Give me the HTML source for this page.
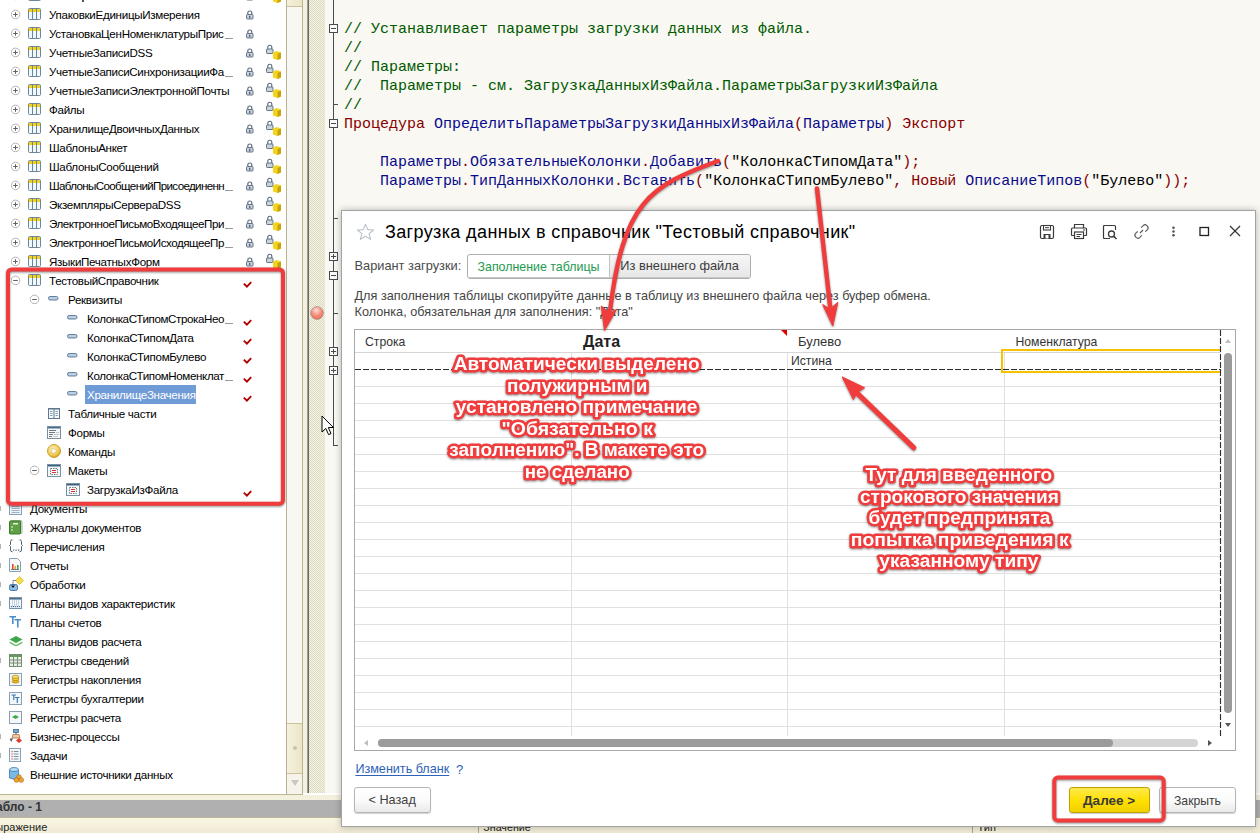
<!DOCTYPE html>
<html><head><meta charset="utf-8">
<style>
*{box-sizing:border-box}
html,body{margin:0;padding:0}
body{width:1260px;height:833px;position:relative;overflow:hidden;background:#f9f8f3;font-family:"Liberation Sans",sans-serif}
.a{position:absolute}
/* tree */
#tree{left:0;top:0;width:286px;height:794px;background:#fff;overflow:hidden}
.r{position:absolute;left:0;height:19px;width:286px;font-size:11.2px;color:#000;white-space:nowrap}
.tt{font-size:11.6px;letter-spacing:-0.3px;line-height:15px;white-space:nowrap;color:#000}
/* code */
.code{position:absolute;left:344px;font-family:"Liberation Mono",monospace;font-size:15px;line-height:19px;white-space:pre;color:#000}
.cm{color:#005a00}
.kw{color:#8a0000}
.id{color:#0a0a8c}
.pu{color:#8a0000}
</style></head>
<body>
<!-- tree panel -->
<div id="tree" class="a"><svg class="a" style="left:11px;top:-10px" width="10" height="11" viewBox="0 0 10 11" ><circle cx="4.5" cy="5.4" r="4.3" fill="#fff" stroke="#b3b3b3" stroke-width="1"/><line x1="2.2" y1="5.5" x2="6.8" y2="5.5" stroke="#606060" stroke-width="1"/><line x1="4.5" y1="3.2" x2="4.5" y2="7.8" stroke="#606060" stroke-width="1"/></svg><svg class="a" style="left:28px;top:-11px" width="13" height="12" viewBox="0 0 13 12" ><rect x="0.5" y="0.5" width="12" height="11" rx="1" fill="#eef8fd" stroke="#6f8599"/><rect x="1" y="1" width="3" height="3" fill="#f5d21c"/><rect x="5" y="1" width="3" height="3" fill="#f5d21c"/><rect x="9" y="1" width="3" height="3" fill="#f5d21c"/><line x1="4.5" y1="1" x2="4.5" y2="11" stroke="#6f8599"/><line x1="8.5" y1="1" x2="8.5" y2="11" stroke="#6f8599"/></svg><div class="a" style="left:82px;top:0;width:2px;height:2px;background:#555"></div><svg class="a" style="left:246px;top:-9px" width="8" height="10" viewBox="0 0 8 10" ><path d="M1.8 4.5 V3 a2 2 0 0 1 4 0 V4.5" fill="none" stroke="#56677a" stroke-width="1.1"/><rect x="0.5" y="4.5" width="6.5" height="4.5" rx="0.8" fill="#c9d3dc" stroke="#56677a" stroke-width="0.9"/><rect x="3" y="5.8" width="1.4" height="2.4" fill="#56677a"/></svg><svg class="a" style="left:266px;top:-13px" width="16" height="17" viewBox="0 0 16 17" ><path d="M1.8 5 V3.2 a2 2 0 0 1 4 0 V5" fill="none" stroke="#56677a" stroke-width="1.1"/><rect x="0.5" y="5" width="6.5" height="4.5" rx="0.8" fill="#c9d3dc" stroke="#56677a" stroke-width="0.9"/><path d="M7 8.5 L10.5 7 L15 8.5 L15 14.5 L11.5 16 L7 14.5 Z" fill="#f2d51c"/><path d="M11.5 10 L15 8.5 L15 14.5 L11.5 16 Z" fill="#c9a30e"/></svg><svg class="a" style="left:11px;top:9px" width="10" height="11" viewBox="0 0 10 11" ><circle cx="4.5" cy="5.4" r="4.3" fill="#fff" stroke="#b3b3b3" stroke-width="1"/><line x1="2.2" y1="5.5" x2="6.8" y2="5.5" stroke="#606060" stroke-width="1"/><line x1="4.5" y1="3.2" x2="4.5" y2="7.8" stroke="#606060" stroke-width="1"/></svg><svg class="a" style="left:28px;top:8px" width="13" height="12" viewBox="0 0 13 12" ><rect x="0.5" y="0.5" width="12" height="11" rx="1" fill="#eef8fd" stroke="#6f8599"/><rect x="1" y="1" width="3" height="3" fill="#f5d21c"/><rect x="5" y="1" width="3" height="3" fill="#f5d21c"/><rect x="9" y="1" width="3" height="3" fill="#f5d21c"/><line x1="4.5" y1="1" x2="4.5" y2="11" stroke="#6f8599"/><line x1="8.5" y1="1" x2="8.5" y2="11" stroke="#6f8599"/></svg><div class="a tt" style="left:49px;top:6.9px">УпаковкиЕдиницыИзмерения</div><svg class="a" style="left:246px;top:10px" width="8" height="10" viewBox="0 0 8 10" ><path d="M1.8 4.5 V3 a2 2 0 0 1 4 0 V4.5" fill="none" stroke="#56677a" stroke-width="1.1"/><rect x="0.5" y="4.5" width="6.5" height="4.5" rx="0.8" fill="#c9d3dc" stroke="#56677a" stroke-width="0.9"/><rect x="3" y="5.8" width="1.4" height="2.4" fill="#56677a"/></svg><svg class="a" style="left:11px;top:28px" width="10" height="11" viewBox="0 0 10 11" ><circle cx="4.5" cy="5.4" r="4.3" fill="#fff" stroke="#b3b3b3" stroke-width="1"/><line x1="2.2" y1="5.5" x2="6.8" y2="5.5" stroke="#606060" stroke-width="1"/><line x1="4.5" y1="3.2" x2="4.5" y2="7.8" stroke="#606060" stroke-width="1"/></svg><svg class="a" style="left:28px;top:27px" width="13" height="12" viewBox="0 0 13 12" ><rect x="0.5" y="0.5" width="12" height="11" rx="1" fill="#eef8fd" stroke="#6f8599"/><rect x="1" y="1" width="3" height="3" fill="#f5d21c"/><rect x="5" y="1" width="3" height="3" fill="#f5d21c"/><rect x="9" y="1" width="3" height="3" fill="#f5d21c"/><line x1="4.5" y1="1" x2="4.5" y2="11" stroke="#6f8599"/><line x1="8.5" y1="1" x2="8.5" y2="11" stroke="#6f8599"/></svg><div class="a tt" style="left:49px;top:25.9px;letter-spacing:-0.300px">УстановкаЦенНоменклатурыПрис</div><div class="a" style="left:225px;top:37.8px;width:8px;height:1px;background:#9a9a9a"></div><svg class="a" style="left:246px;top:29px" width="8" height="10" viewBox="0 0 8 10" ><path d="M1.8 4.5 V3 a2 2 0 0 1 4 0 V4.5" fill="none" stroke="#56677a" stroke-width="1.1"/><rect x="0.5" y="4.5" width="6.5" height="4.5" rx="0.8" fill="#c9d3dc" stroke="#56677a" stroke-width="0.9"/><rect x="3" y="5.8" width="1.4" height="2.4" fill="#56677a"/></svg><svg class="a" style="left:11px;top:47px" width="10" height="11" viewBox="0 0 10 11" ><circle cx="4.5" cy="5.4" r="4.3" fill="#fff" stroke="#b3b3b3" stroke-width="1"/><line x1="2.2" y1="5.5" x2="6.8" y2="5.5" stroke="#606060" stroke-width="1"/><line x1="4.5" y1="3.2" x2="4.5" y2="7.8" stroke="#606060" stroke-width="1"/></svg><svg class="a" style="left:28px;top:46px" width="13" height="12" viewBox="0 0 13 12" ><rect x="0.5" y="0.5" width="12" height="11" rx="1" fill="#eef8fd" stroke="#6f8599"/><rect x="1" y="1" width="3" height="3" fill="#f5d21c"/><rect x="5" y="1" width="3" height="3" fill="#f5d21c"/><rect x="9" y="1" width="3" height="3" fill="#f5d21c"/><line x1="4.5" y1="1" x2="4.5" y2="11" stroke="#6f8599"/><line x1="8.5" y1="1" x2="8.5" y2="11" stroke="#6f8599"/></svg><div class="a tt" style="left:49px;top:44.9px">УчетныеЗаписиDSS</div><svg class="a" style="left:246px;top:48px" width="8" height="10" viewBox="0 0 8 10" ><path d="M1.8 4.5 V3 a2 2 0 0 1 4 0 V4.5" fill="none" stroke="#56677a" stroke-width="1.1"/><rect x="0.5" y="4.5" width="6.5" height="4.5" rx="0.8" fill="#c9d3dc" stroke="#56677a" stroke-width="0.9"/><rect x="3" y="5.8" width="1.4" height="2.4" fill="#56677a"/></svg><svg class="a" style="left:266px;top:44px" width="16" height="17" viewBox="0 0 16 17" ><path d="M1.8 5 V3.2 a2 2 0 0 1 4 0 V5" fill="none" stroke="#56677a" stroke-width="1.1"/><rect x="0.5" y="5" width="6.5" height="4.5" rx="0.8" fill="#c9d3dc" stroke="#56677a" stroke-width="0.9"/><path d="M7 8.5 L10.5 7 L15 8.5 L15 14.5 L11.5 16 L7 14.5 Z" fill="#f2d51c"/><path d="M11.5 10 L15 8.5 L15 14.5 L11.5 16 Z" fill="#c9a30e"/></svg><svg class="a" style="left:11px;top:66px" width="10" height="11" viewBox="0 0 10 11" ><circle cx="4.5" cy="5.4" r="4.3" fill="#fff" stroke="#b3b3b3" stroke-width="1"/><line x1="2.2" y1="5.5" x2="6.8" y2="5.5" stroke="#606060" stroke-width="1"/><line x1="4.5" y1="3.2" x2="4.5" y2="7.8" stroke="#606060" stroke-width="1"/></svg><svg class="a" style="left:28px;top:65px" width="13" height="12" viewBox="0 0 13 12" ><rect x="0.5" y="0.5" width="12" height="11" rx="1" fill="#eef8fd" stroke="#6f8599"/><rect x="1" y="1" width="3" height="3" fill="#f5d21c"/><rect x="5" y="1" width="3" height="3" fill="#f5d21c"/><rect x="9" y="1" width="3" height="3" fill="#f5d21c"/><line x1="4.5" y1="1" x2="4.5" y2="11" stroke="#6f8599"/><line x1="8.5" y1="1" x2="8.5" y2="11" stroke="#6f8599"/></svg><div class="a tt" style="left:49px;top:63.9px;letter-spacing:-0.318px">УчетныеЗаписиСинхронизацииФа</div><div class="a" style="left:225px;top:75.8px;width:8px;height:1px;background:#9a9a9a"></div><svg class="a" style="left:246px;top:67px" width="8" height="10" viewBox="0 0 8 10" ><path d="M1.8 4.5 V3 a2 2 0 0 1 4 0 V4.5" fill="none" stroke="#56677a" stroke-width="1.1"/><rect x="0.5" y="4.5" width="6.5" height="4.5" rx="0.8" fill="#c9d3dc" stroke="#56677a" stroke-width="0.9"/><rect x="3" y="5.8" width="1.4" height="2.4" fill="#56677a"/></svg><svg class="a" style="left:266px;top:63px" width="16" height="17" viewBox="0 0 16 17" ><path d="M1.8 5 V3.2 a2 2 0 0 1 4 0 V5" fill="none" stroke="#56677a" stroke-width="1.1"/><rect x="0.5" y="5" width="6.5" height="4.5" rx="0.8" fill="#c9d3dc" stroke="#56677a" stroke-width="0.9"/><path d="M7 8.5 L10.5 7 L15 8.5 L15 14.5 L11.5 16 L7 14.5 Z" fill="#f2d51c"/><path d="M11.5 10 L15 8.5 L15 14.5 L11.5 16 Z" fill="#c9a30e"/></svg><svg class="a" style="left:11px;top:85px" width="10" height="11" viewBox="0 0 10 11" ><circle cx="4.5" cy="5.4" r="4.3" fill="#fff" stroke="#b3b3b3" stroke-width="1"/><line x1="2.2" y1="5.5" x2="6.8" y2="5.5" stroke="#606060" stroke-width="1"/><line x1="4.5" y1="3.2" x2="4.5" y2="7.8" stroke="#606060" stroke-width="1"/></svg><svg class="a" style="left:28px;top:84px" width="13" height="12" viewBox="0 0 13 12" ><rect x="0.5" y="0.5" width="12" height="11" rx="1" fill="#eef8fd" stroke="#6f8599"/><rect x="1" y="1" width="3" height="3" fill="#f5d21c"/><rect x="5" y="1" width="3" height="3" fill="#f5d21c"/><rect x="9" y="1" width="3" height="3" fill="#f5d21c"/><line x1="4.5" y1="1" x2="4.5" y2="11" stroke="#6f8599"/><line x1="8.5" y1="1" x2="8.5" y2="11" stroke="#6f8599"/></svg><div class="a tt" style="left:49px;top:82.9px">УчетныеЗаписиЭлектроннойПочты</div><svg class="a" style="left:246px;top:86px" width="8" height="10" viewBox="0 0 8 10" ><path d="M1.8 4.5 V3 a2 2 0 0 1 4 0 V4.5" fill="none" stroke="#56677a" stroke-width="1.1"/><rect x="0.5" y="4.5" width="6.5" height="4.5" rx="0.8" fill="#c9d3dc" stroke="#56677a" stroke-width="0.9"/><rect x="3" y="5.8" width="1.4" height="2.4" fill="#56677a"/></svg><svg class="a" style="left:266px;top:82px" width="16" height="17" viewBox="0 0 16 17" ><path d="M1.8 5 V3.2 a2 2 0 0 1 4 0 V5" fill="none" stroke="#56677a" stroke-width="1.1"/><rect x="0.5" y="5" width="6.5" height="4.5" rx="0.8" fill="#c9d3dc" stroke="#56677a" stroke-width="0.9"/><path d="M7 8.5 L10.5 7 L15 8.5 L15 14.5 L11.5 16 L7 14.5 Z" fill="#f2d51c"/><path d="M11.5 10 L15 8.5 L15 14.5 L11.5 16 Z" fill="#c9a30e"/></svg><svg class="a" style="left:11px;top:104px" width="10" height="11" viewBox="0 0 10 11" ><circle cx="4.5" cy="5.4" r="4.3" fill="#fff" stroke="#b3b3b3" stroke-width="1"/><line x1="2.2" y1="5.5" x2="6.8" y2="5.5" stroke="#606060" stroke-width="1"/><line x1="4.5" y1="3.2" x2="4.5" y2="7.8" stroke="#606060" stroke-width="1"/></svg><svg class="a" style="left:28px;top:103px" width="13" height="12" viewBox="0 0 13 12" ><rect x="0.5" y="0.5" width="12" height="11" rx="1" fill="#eef8fd" stroke="#6f8599"/><rect x="1" y="1" width="3" height="3" fill="#f5d21c"/><rect x="5" y="1" width="3" height="3" fill="#f5d21c"/><rect x="9" y="1" width="3" height="3" fill="#f5d21c"/><line x1="4.5" y1="1" x2="4.5" y2="11" stroke="#6f8599"/><line x1="8.5" y1="1" x2="8.5" y2="11" stroke="#6f8599"/></svg><div class="a tt" style="left:49px;top:101.9px">Файлы</div><svg class="a" style="left:246px;top:105px" width="8" height="10" viewBox="0 0 8 10" ><path d="M1.8 4.5 V3 a2 2 0 0 1 4 0 V4.5" fill="none" stroke="#56677a" stroke-width="1.1"/><rect x="0.5" y="4.5" width="6.5" height="4.5" rx="0.8" fill="#c9d3dc" stroke="#56677a" stroke-width="0.9"/><rect x="3" y="5.8" width="1.4" height="2.4" fill="#56677a"/></svg><svg class="a" style="left:266px;top:101px" width="16" height="17" viewBox="0 0 16 17" ><path d="M1.8 5 V3.2 a2 2 0 0 1 4 0 V5" fill="none" stroke="#56677a" stroke-width="1.1"/><rect x="0.5" y="5" width="6.5" height="4.5" rx="0.8" fill="#c9d3dc" stroke="#56677a" stroke-width="0.9"/><path d="M7 8.5 L10.5 7 L15 8.5 L15 14.5 L11.5 16 L7 14.5 Z" fill="#f2d51c"/><path d="M11.5 10 L15 8.5 L15 14.5 L11.5 16 Z" fill="#c9a30e"/></svg><svg class="a" style="left:11px;top:123px" width="10" height="11" viewBox="0 0 10 11" ><circle cx="4.5" cy="5.4" r="4.3" fill="#fff" stroke="#b3b3b3" stroke-width="1"/><line x1="2.2" y1="5.5" x2="6.8" y2="5.5" stroke="#606060" stroke-width="1"/><line x1="4.5" y1="3.2" x2="4.5" y2="7.8" stroke="#606060" stroke-width="1"/></svg><svg class="a" style="left:28px;top:122px" width="13" height="12" viewBox="0 0 13 12" ><rect x="0.5" y="0.5" width="12" height="11" rx="1" fill="#eef8fd" stroke="#6f8599"/><rect x="1" y="1" width="3" height="3" fill="#f5d21c"/><rect x="5" y="1" width="3" height="3" fill="#f5d21c"/><rect x="9" y="1" width="3" height="3" fill="#f5d21c"/><line x1="4.5" y1="1" x2="4.5" y2="11" stroke="#6f8599"/><line x1="8.5" y1="1" x2="8.5" y2="11" stroke="#6f8599"/></svg><div class="a tt" style="left:49px;top:120.9px">ХранилищеДвоичныхДанных</div><svg class="a" style="left:246px;top:124px" width="8" height="10" viewBox="0 0 8 10" ><path d="M1.8 4.5 V3 a2 2 0 0 1 4 0 V4.5" fill="none" stroke="#56677a" stroke-width="1.1"/><rect x="0.5" y="4.5" width="6.5" height="4.5" rx="0.8" fill="#c9d3dc" stroke="#56677a" stroke-width="0.9"/><rect x="3" y="5.8" width="1.4" height="2.4" fill="#56677a"/></svg><svg class="a" style="left:266px;top:120px" width="16" height="17" viewBox="0 0 16 17" ><path d="M1.8 5 V3.2 a2 2 0 0 1 4 0 V5" fill="none" stroke="#56677a" stroke-width="1.1"/><rect x="0.5" y="5" width="6.5" height="4.5" rx="0.8" fill="#c9d3dc" stroke="#56677a" stroke-width="0.9"/><path d="M7 8.5 L10.5 7 L15 8.5 L15 14.5 L11.5 16 L7 14.5 Z" fill="#f2d51c"/><path d="M11.5 10 L15 8.5 L15 14.5 L11.5 16 Z" fill="#c9a30e"/></svg><svg class="a" style="left:11px;top:142px" width="10" height="11" viewBox="0 0 10 11" ><circle cx="4.5" cy="5.4" r="4.3" fill="#fff" stroke="#b3b3b3" stroke-width="1"/><line x1="2.2" y1="5.5" x2="6.8" y2="5.5" stroke="#606060" stroke-width="1"/><line x1="4.5" y1="3.2" x2="4.5" y2="7.8" stroke="#606060" stroke-width="1"/></svg><svg class="a" style="left:28px;top:141px" width="13" height="12" viewBox="0 0 13 12" ><rect x="0.5" y="0.5" width="12" height="11" rx="1" fill="#eef8fd" stroke="#6f8599"/><rect x="1" y="1" width="3" height="3" fill="#f5d21c"/><rect x="5" y="1" width="3" height="3" fill="#f5d21c"/><rect x="9" y="1" width="3" height="3" fill="#f5d21c"/><line x1="4.5" y1="1" x2="4.5" y2="11" stroke="#6f8599"/><line x1="8.5" y1="1" x2="8.5" y2="11" stroke="#6f8599"/></svg><div class="a tt" style="left:49px;top:139.9px">ШаблоныАнкет</div><svg class="a" style="left:246px;top:143px" width="8" height="10" viewBox="0 0 8 10" ><path d="M1.8 4.5 V3 a2 2 0 0 1 4 0 V4.5" fill="none" stroke="#56677a" stroke-width="1.1"/><rect x="0.5" y="4.5" width="6.5" height="4.5" rx="0.8" fill="#c9d3dc" stroke="#56677a" stroke-width="0.9"/><rect x="3" y="5.8" width="1.4" height="2.4" fill="#56677a"/></svg><svg class="a" style="left:266px;top:139px" width="16" height="17" viewBox="0 0 16 17" ><path d="M1.8 5 V3.2 a2 2 0 0 1 4 0 V5" fill="none" stroke="#56677a" stroke-width="1.1"/><rect x="0.5" y="5" width="6.5" height="4.5" rx="0.8" fill="#c9d3dc" stroke="#56677a" stroke-width="0.9"/><path d="M7 8.5 L10.5 7 L15 8.5 L15 14.5 L11.5 16 L7 14.5 Z" fill="#f2d51c"/><path d="M11.5 10 L15 8.5 L15 14.5 L11.5 16 Z" fill="#c9a30e"/></svg><svg class="a" style="left:11px;top:161px" width="10" height="11" viewBox="0 0 10 11" ><circle cx="4.5" cy="5.4" r="4.3" fill="#fff" stroke="#b3b3b3" stroke-width="1"/><line x1="2.2" y1="5.5" x2="6.8" y2="5.5" stroke="#606060" stroke-width="1"/><line x1="4.5" y1="3.2" x2="4.5" y2="7.8" stroke="#606060" stroke-width="1"/></svg><svg class="a" style="left:28px;top:160px" width="13" height="12" viewBox="0 0 13 12" ><rect x="0.5" y="0.5" width="12" height="11" rx="1" fill="#eef8fd" stroke="#6f8599"/><rect x="1" y="1" width="3" height="3" fill="#f5d21c"/><rect x="5" y="1" width="3" height="3" fill="#f5d21c"/><rect x="9" y="1" width="3" height="3" fill="#f5d21c"/><line x1="4.5" y1="1" x2="4.5" y2="11" stroke="#6f8599"/><line x1="8.5" y1="1" x2="8.5" y2="11" stroke="#6f8599"/></svg><div class="a tt" style="left:49px;top:158.9px">ШаблоныСообщений</div><svg class="a" style="left:246px;top:162px" width="8" height="10" viewBox="0 0 8 10" ><path d="M1.8 4.5 V3 a2 2 0 0 1 4 0 V4.5" fill="none" stroke="#56677a" stroke-width="1.1"/><rect x="0.5" y="4.5" width="6.5" height="4.5" rx="0.8" fill="#c9d3dc" stroke="#56677a" stroke-width="0.9"/><rect x="3" y="5.8" width="1.4" height="2.4" fill="#56677a"/></svg><svg class="a" style="left:266px;top:158px" width="16" height="17" viewBox="0 0 16 17" ><path d="M1.8 5 V3.2 a2 2 0 0 1 4 0 V5" fill="none" stroke="#56677a" stroke-width="1.1"/><rect x="0.5" y="5" width="6.5" height="4.5" rx="0.8" fill="#c9d3dc" stroke="#56677a" stroke-width="0.9"/><path d="M7 8.5 L10.5 7 L15 8.5 L15 14.5 L11.5 16 L7 14.5 Z" fill="#f2d51c"/><path d="M11.5 10 L15 8.5 L15 14.5 L11.5 16 Z" fill="#c9a30e"/></svg><svg class="a" style="left:11px;top:180px" width="10" height="11" viewBox="0 0 10 11" ><circle cx="4.5" cy="5.4" r="4.3" fill="#fff" stroke="#b3b3b3" stroke-width="1"/><line x1="2.2" y1="5.5" x2="6.8" y2="5.5" stroke="#606060" stroke-width="1"/><line x1="4.5" y1="3.2" x2="4.5" y2="7.8" stroke="#606060" stroke-width="1"/></svg><svg class="a" style="left:28px;top:179px" width="13" height="12" viewBox="0 0 13 12" ><rect x="0.5" y="0.5" width="12" height="11" rx="1" fill="#eef8fd" stroke="#6f8599"/><rect x="1" y="1" width="3" height="3" fill="#f5d21c"/><rect x="5" y="1" width="3" height="3" fill="#f5d21c"/><rect x="9" y="1" width="3" height="3" fill="#f5d21c"/><line x1="4.5" y1="1" x2="4.5" y2="11" stroke="#6f8599"/><line x1="8.5" y1="1" x2="8.5" y2="11" stroke="#6f8599"/></svg><div class="a tt" style="left:49px;top:177.9px;letter-spacing:-0.646px">ШаблоныСообщенийПрисоединенн</div><div class="a" style="left:225px;top:189.8px;width:8px;height:1px;background:#9a9a9a"></div><svg class="a" style="left:246px;top:181px" width="8" height="10" viewBox="0 0 8 10" ><path d="M1.8 4.5 V3 a2 2 0 0 1 4 0 V4.5" fill="none" stroke="#56677a" stroke-width="1.1"/><rect x="0.5" y="4.5" width="6.5" height="4.5" rx="0.8" fill="#c9d3dc" stroke="#56677a" stroke-width="0.9"/><rect x="3" y="5.8" width="1.4" height="2.4" fill="#56677a"/></svg><svg class="a" style="left:266px;top:177px" width="16" height="17" viewBox="0 0 16 17" ><path d="M1.8 5 V3.2 a2 2 0 0 1 4 0 V5" fill="none" stroke="#56677a" stroke-width="1.1"/><rect x="0.5" y="5" width="6.5" height="4.5" rx="0.8" fill="#c9d3dc" stroke="#56677a" stroke-width="0.9"/><path d="M7 8.5 L10.5 7 L15 8.5 L15 14.5 L11.5 16 L7 14.5 Z" fill="#f2d51c"/><path d="M11.5 10 L15 8.5 L15 14.5 L11.5 16 Z" fill="#c9a30e"/></svg><svg class="a" style="left:11px;top:199px" width="10" height="11" viewBox="0 0 10 11" ><circle cx="4.5" cy="5.4" r="4.3" fill="#fff" stroke="#b3b3b3" stroke-width="1"/><line x1="2.2" y1="5.5" x2="6.8" y2="5.5" stroke="#606060" stroke-width="1"/><line x1="4.5" y1="3.2" x2="4.5" y2="7.8" stroke="#606060" stroke-width="1"/></svg><svg class="a" style="left:28px;top:198px" width="13" height="12" viewBox="0 0 13 12" ><rect x="0.5" y="0.5" width="12" height="11" rx="1" fill="#eef8fd" stroke="#6f8599"/><rect x="1" y="1" width="3" height="3" fill="#f5d21c"/><rect x="5" y="1" width="3" height="3" fill="#f5d21c"/><rect x="9" y="1" width="3" height="3" fill="#f5d21c"/><line x1="4.5" y1="1" x2="4.5" y2="11" stroke="#6f8599"/><line x1="8.5" y1="1" x2="8.5" y2="11" stroke="#6f8599"/></svg><div class="a tt" style="left:49px;top:196.9px">ЭкземплярыСервераDSS</div><svg class="a" style="left:246px;top:200px" width="8" height="10" viewBox="0 0 8 10" ><path d="M1.8 4.5 V3 a2 2 0 0 1 4 0 V4.5" fill="none" stroke="#56677a" stroke-width="1.1"/><rect x="0.5" y="4.5" width="6.5" height="4.5" rx="0.8" fill="#c9d3dc" stroke="#56677a" stroke-width="0.9"/><rect x="3" y="5.8" width="1.4" height="2.4" fill="#56677a"/></svg><svg class="a" style="left:266px;top:196px" width="16" height="17" viewBox="0 0 16 17" ><path d="M1.8 5 V3.2 a2 2 0 0 1 4 0 V5" fill="none" stroke="#56677a" stroke-width="1.1"/><rect x="0.5" y="5" width="6.5" height="4.5" rx="0.8" fill="#c9d3dc" stroke="#56677a" stroke-width="0.9"/><path d="M7 8.5 L10.5 7 L15 8.5 L15 14.5 L11.5 16 L7 14.5 Z" fill="#f2d51c"/><path d="M11.5 10 L15 8.5 L15 14.5 L11.5 16 Z" fill="#c9a30e"/></svg><svg class="a" style="left:11px;top:218px" width="10" height="11" viewBox="0 0 10 11" ><circle cx="4.5" cy="5.4" r="4.3" fill="#fff" stroke="#b3b3b3" stroke-width="1"/><line x1="2.2" y1="5.5" x2="6.8" y2="5.5" stroke="#606060" stroke-width="1"/><line x1="4.5" y1="3.2" x2="4.5" y2="7.8" stroke="#606060" stroke-width="1"/></svg><svg class="a" style="left:28px;top:217px" width="13" height="12" viewBox="0 0 13 12" ><rect x="0.5" y="0.5" width="12" height="11" rx="1" fill="#eef8fd" stroke="#6f8599"/><rect x="1" y="1" width="3" height="3" fill="#f5d21c"/><rect x="5" y="1" width="3" height="3" fill="#f5d21c"/><rect x="9" y="1" width="3" height="3" fill="#f5d21c"/><line x1="4.5" y1="1" x2="4.5" y2="11" stroke="#6f8599"/><line x1="8.5" y1="1" x2="8.5" y2="11" stroke="#6f8599"/></svg><div class="a tt" style="left:49px;top:215.9px;letter-spacing:-0.443px">ЭлектронноеПисьмоВходящееПри</div><div class="a" style="left:225px;top:227.8px;width:8px;height:1px;background:#9a9a9a"></div><svg class="a" style="left:246px;top:219px" width="8" height="10" viewBox="0 0 8 10" ><path d="M1.8 4.5 V3 a2 2 0 0 1 4 0 V4.5" fill="none" stroke="#56677a" stroke-width="1.1"/><rect x="0.5" y="4.5" width="6.5" height="4.5" rx="0.8" fill="#c9d3dc" stroke="#56677a" stroke-width="0.9"/><rect x="3" y="5.8" width="1.4" height="2.4" fill="#56677a"/></svg><svg class="a" style="left:266px;top:215px" width="16" height="17" viewBox="0 0 16 17" ><path d="M1.8 5 V3.2 a2 2 0 0 1 4 0 V5" fill="none" stroke="#56677a" stroke-width="1.1"/><rect x="0.5" y="5" width="6.5" height="4.5" rx="0.8" fill="#c9d3dc" stroke="#56677a" stroke-width="0.9"/><path d="M7 8.5 L10.5 7 L15 8.5 L15 14.5 L11.5 16 L7 14.5 Z" fill="#f2d51c"/><path d="M11.5 10 L15 8.5 L15 14.5 L11.5 16 Z" fill="#c9a30e"/></svg><svg class="a" style="left:11px;top:237px" width="10" height="11" viewBox="0 0 10 11" ><circle cx="4.5" cy="5.4" r="4.3" fill="#fff" stroke="#b3b3b3" stroke-width="1"/><line x1="2.2" y1="5.5" x2="6.8" y2="5.5" stroke="#606060" stroke-width="1"/><line x1="4.5" y1="3.2" x2="4.5" y2="7.8" stroke="#606060" stroke-width="1"/></svg><svg class="a" style="left:28px;top:236px" width="13" height="12" viewBox="0 0 13 12" ><rect x="0.5" y="0.5" width="12" height="11" rx="1" fill="#eef8fd" stroke="#6f8599"/><rect x="1" y="1" width="3" height="3" fill="#f5d21c"/><rect x="5" y="1" width="3" height="3" fill="#f5d21c"/><rect x="9" y="1" width="3" height="3" fill="#f5d21c"/><line x1="4.5" y1="1" x2="4.5" y2="11" stroke="#6f8599"/><line x1="8.5" y1="1" x2="8.5" y2="11" stroke="#6f8599"/></svg><div class="a tt" style="left:49px;top:234.9px;letter-spacing:-0.446px">ЭлектронноеПисьмоИсходящееПр</div><div class="a" style="left:225px;top:246.8px;width:8px;height:1px;background:#9a9a9a"></div><svg class="a" style="left:246px;top:238px" width="8" height="10" viewBox="0 0 8 10" ><path d="M1.8 4.5 V3 a2 2 0 0 1 4 0 V4.5" fill="none" stroke="#56677a" stroke-width="1.1"/><rect x="0.5" y="4.5" width="6.5" height="4.5" rx="0.8" fill="#c9d3dc" stroke="#56677a" stroke-width="0.9"/><rect x="3" y="5.8" width="1.4" height="2.4" fill="#56677a"/></svg><svg class="a" style="left:266px;top:234px" width="16" height="17" viewBox="0 0 16 17" ><path d="M1.8 5 V3.2 a2 2 0 0 1 4 0 V5" fill="none" stroke="#56677a" stroke-width="1.1"/><rect x="0.5" y="5" width="6.5" height="4.5" rx="0.8" fill="#c9d3dc" stroke="#56677a" stroke-width="0.9"/><path d="M7 8.5 L10.5 7 L15 8.5 L15 14.5 L11.5 16 L7 14.5 Z" fill="#f2d51c"/><path d="M11.5 10 L15 8.5 L15 14.5 L11.5 16 Z" fill="#c9a30e"/></svg><svg class="a" style="left:11px;top:256px" width="10" height="11" viewBox="0 0 10 11" ><circle cx="4.5" cy="5.4" r="4.3" fill="#fff" stroke="#b3b3b3" stroke-width="1"/><line x1="2.2" y1="5.5" x2="6.8" y2="5.5" stroke="#606060" stroke-width="1"/><line x1="4.5" y1="3.2" x2="4.5" y2="7.8" stroke="#606060" stroke-width="1"/></svg><svg class="a" style="left:28px;top:255px" width="13" height="12" viewBox="0 0 13 12" ><rect x="0.5" y="0.5" width="12" height="11" rx="1" fill="#eef8fd" stroke="#6f8599"/><rect x="1" y="1" width="3" height="3" fill="#f5d21c"/><rect x="5" y="1" width="3" height="3" fill="#f5d21c"/><rect x="9" y="1" width="3" height="3" fill="#f5d21c"/><line x1="4.5" y1="1" x2="4.5" y2="11" stroke="#6f8599"/><line x1="8.5" y1="1" x2="8.5" y2="11" stroke="#6f8599"/></svg><div class="a tt" style="left:49px;top:253.9px">ЯзыкиПечатныхФорм</div><svg class="a" style="left:246px;top:257px" width="8" height="10" viewBox="0 0 8 10" ><path d="M1.8 4.5 V3 a2 2 0 0 1 4 0 V4.5" fill="none" stroke="#56677a" stroke-width="1.1"/><rect x="0.5" y="4.5" width="6.5" height="4.5" rx="0.8" fill="#c9d3dc" stroke="#56677a" stroke-width="0.9"/><rect x="3" y="5.8" width="1.4" height="2.4" fill="#56677a"/></svg><svg class="a" style="left:266px;top:253px" width="16" height="17" viewBox="0 0 16 17" ><path d="M1.8 5 V3.2 a2 2 0 0 1 4 0 V5" fill="none" stroke="#56677a" stroke-width="1.1"/><rect x="0.5" y="5" width="6.5" height="4.5" rx="0.8" fill="#c9d3dc" stroke="#56677a" stroke-width="0.9"/><path d="M7 8.5 L10.5 7 L15 8.5 L15 14.5 L11.5 16 L7 14.5 Z" fill="#f2d51c"/><path d="M11.5 10 L15 8.5 L15 14.5 L11.5 16 Z" fill="#c9a30e"/></svg><svg class="a" style="left:11px;top:275px" width="10" height="11" viewBox="0 0 10 11" ><circle cx="4.5" cy="5.4" r="4.3" fill="#fff" stroke="#b3b3b3" stroke-width="1"/><line x1="2.2" y1="5.5" x2="6.8" y2="5.5" stroke="#606060" stroke-width="1"/></svg><svg class="a" style="left:28px;top:274px" width="13" height="12" viewBox="0 0 13 12" ><rect x="0.5" y="0.5" width="12" height="11" rx="1" fill="#eef8fd" stroke="#6f8599"/><rect x="1" y="1" width="3" height="3" fill="#f5d21c"/><rect x="5" y="1" width="3" height="3" fill="#f5d21c"/><rect x="9" y="1" width="3" height="3" fill="#f5d21c"/><line x1="4.5" y1="1" x2="4.5" y2="11" stroke="#6f8599"/><line x1="8.5" y1="1" x2="8.5" y2="11" stroke="#6f8599"/></svg><div class="a tt" style="left:49px;top:272.9px">ТестовыйСправочник</div><svg class="a" style="left:243px;top:281px" width="9" height="8" viewBox="0 0 9 8" ><path d="M0.8 2.6 L3.9 5.6 L8.2 1.2" fill="none" stroke="#b00000" stroke-width="1.9"/></svg><svg class="a" style="left:30px;top:294px" width="10" height="11" viewBox="0 0 10 11" ><circle cx="4.5" cy="5.4" r="4.3" fill="#fff" stroke="#b3b3b3" stroke-width="1"/><line x1="2.2" y1="5.5" x2="6.8" y2="5.5" stroke="#606060" stroke-width="1"/></svg><svg class="a" style="left:48px;top:296px" width="11" height="5" viewBox="0 0 11 5" ><rect x="0.5" y="0.5" width="9.5" height="3.5" rx="1.6" fill="#b9cfe2" stroke="#55738f" stroke-width="0.9"/></svg><div class="a tt" style="left:68px;top:291.9px">Реквизиты</div><svg class="a" style="left:67px;top:315px" width="11" height="5" viewBox="0 0 11 5" ><rect x="0.5" y="0.5" width="9.5" height="3.5" rx="1.6" fill="#b9cfe2" stroke="#55738f" stroke-width="0.9"/></svg><div class="a tt" style="left:87px;top:310.9px;letter-spacing:-0.400px">КолонкаСТипомСтрокаНео</div><div class="a" style="left:225px;top:322.8px;width:8px;height:1px;background:#9a9a9a"></div><svg class="a" style="left:243px;top:319px" width="9" height="8" viewBox="0 0 9 8" ><path d="M0.8 2.6 L3.9 5.6 L8.2 1.2" fill="none" stroke="#b00000" stroke-width="1.9"/></svg><svg class="a" style="left:67px;top:334px" width="11" height="5" viewBox="0 0 11 5" ><rect x="0.5" y="0.5" width="9.5" height="3.5" rx="1.6" fill="#b9cfe2" stroke="#55738f" stroke-width="0.9"/></svg><div class="a tt" style="left:87px;top:329.9px">КолонкаСТипомДата</div><svg class="a" style="left:243px;top:338px" width="9" height="8" viewBox="0 0 9 8" ><path d="M0.8 2.6 L3.9 5.6 L8.2 1.2" fill="none" stroke="#b00000" stroke-width="1.9"/></svg><svg class="a" style="left:67px;top:353px" width="11" height="5" viewBox="0 0 11 5" ><rect x="0.5" y="0.5" width="9.5" height="3.5" rx="1.6" fill="#b9cfe2" stroke="#55738f" stroke-width="0.9"/></svg><div class="a tt" style="left:87px;top:348.9px">КолонкаСТипомБулево</div><svg class="a" style="left:243px;top:357px" width="9" height="8" viewBox="0 0 9 8" ><path d="M0.8 2.6 L3.9 5.6 L8.2 1.2" fill="none" stroke="#b00000" stroke-width="1.9"/></svg><svg class="a" style="left:67px;top:372px" width="11" height="5" viewBox="0 0 11 5" ><rect x="0.5" y="0.5" width="9.5" height="3.5" rx="1.6" fill="#b9cfe2" stroke="#55738f" stroke-width="0.9"/></svg><div class="a tt" style="left:87px;top:367.9px;letter-spacing:-0.377px">КолонкаСТипомНоменклат</div><div class="a" style="left:225px;top:379.8px;width:8px;height:1px;background:#9a9a9a"></div><svg class="a" style="left:243px;top:376px" width="9" height="8" viewBox="0 0 9 8" ><path d="M0.8 2.6 L3.9 5.6 L8.2 1.2" fill="none" stroke="#b00000" stroke-width="1.9"/></svg><svg class="a" style="left:67px;top:391px" width="11" height="5" viewBox="0 0 11 5" ><rect x="0.5" y="0.5" width="9.5" height="3.5" rx="1.6" fill="#b9cfe2" stroke="#55738f" stroke-width="0.9"/></svg><div class="a" style="left:85px;top:385px;width:111px;height:19px;background:#6f9bd6"></div><div class="a tt" style="left:87px;top:386.9px;color:#fff">ХранилищеЗначения</div><svg class="a" style="left:243px;top:395px" width="9" height="8" viewBox="0 0 9 8" ><path d="M0.8 2.6 L3.9 5.6 L8.2 1.2" fill="none" stroke="#b00000" stroke-width="1.9"/></svg><svg class="a" style="left:48px;top:408px" width="12" height="11" viewBox="0 0 12 11" ><rect x="0.5" y="0.5" width="11" height="10" fill="#f7fafc" stroke="#5f7890"/><rect x="1" y="1" width="10" height="1" fill="#9fb4c6"/><line x1="6" y1="1" x2="6" y2="10" stroke="#5f7890"/><line x1="2" y1="3.5" x2="4.5" y2="3.5" stroke="#8aa0b3"/><line x1="7.5" y1="3.5" x2="10" y2="3.5" stroke="#8aa0b3"/><line x1="2" y1="5.5" x2="4.5" y2="5.5" stroke="#8aa0b3"/><line x1="7.5" y1="5.5" x2="10" y2="5.5" stroke="#8aa0b3"/><line x1="2" y1="7.5" x2="4.5" y2="7.5" stroke="#8aa0b3"/><line x1="7.5" y1="7.5" x2="10" y2="7.5" stroke="#8aa0b3"/></svg><div class="a tt" style="left:68px;top:405.9px">Табличные части</div><svg class="a" style="left:47px;top:426px" width="14" height="13" viewBox="0 0 14 13" ><rect x="0.5" y="0.5" width="13" height="12" fill="#f6f8fa" stroke="#7890a4"/><rect x="1" y="1" width="12" height="1.5" fill="#4f6f8f"/><rect x="2" y="4" width="7" height="1" fill="#707a84"/><rect x="2" y="6" width="6" height="1" fill="#707a84"/><rect x="2" y="8" width="4" height="1" fill="#707a84"/><rect x="2" y="10" width="3" height="1" fill="#707a84"/><rect x="9" y="6" width="3" height="1" fill="#c0c8d0"/><rect x="7" y="8" width="5" height="1" fill="#c0c8d0"/><rect x="6" y="10" width="5" height="1" fill="#c0c8d0"/></svg><div class="a tt" style="left:68px;top:424.9px">Формы</div><svg class="a" style="left:47px;top:444px" width="14" height="14" viewBox="0 0 14 14" ><defs><radialGradient id="cmdg" cx="0.4" cy="0.35" r="0.7"><stop offset="0" stop-color="#fff6c8"/><stop offset="0.7" stop-color="#f0c848"/><stop offset="1" stop-color="#c89a20"/></radialGradient></defs><circle cx="7" cy="7" r="6.5" fill="url(#cmdg)" stroke="#c9a030" stroke-width="1"/><path d="M5 3.8 L10.2 7 L5 10.2 Z" fill="#fff" stroke="#d0b060" stroke-width="0.6"/></svg><div class="a tt" style="left:68px;top:443.9px">Команды</div><svg class="a" style="left:30px;top:465px" width="10" height="11" viewBox="0 0 10 11" ><circle cx="4.5" cy="5.4" r="4.3" fill="#fff" stroke="#b3b3b3" stroke-width="1"/><line x1="2.2" y1="5.5" x2="6.8" y2="5.5" stroke="#606060" stroke-width="1"/></svg><svg class="a" style="left:47px;top:464px" width="14" height="13" viewBox="0 0 14 13" ><rect x="0.5" y="0.5" width="13" height="12" fill="#f6f8fa" stroke="#7890a4"/><rect x="1" y="1" width="12" height="1.5" fill="#3f5f7f"/><rect x="3.5" y="4.5" width="7" height="6" fill="none" stroke="#707a84" stroke-dasharray="1.5 1"/><line x1="5" y1="6.5" x2="9" y2="6.5" stroke="#e03030"/><line x1="5" y1="8.5" x2="9" y2="8.5" stroke="#e03030"/></svg><div class="a tt" style="left:68px;top:462.9px">Макеты</div><svg class="a" style="left:66px;top:483px" width="14" height="13" viewBox="0 0 14 13" ><rect x="0.5" y="0.5" width="13" height="12" fill="#f6f8fa" stroke="#7890a4"/><rect x="1" y="1" width="12" height="1.5" fill="#3f5f7f"/><rect x="3.5" y="4.5" width="7" height="6" fill="none" stroke="#707a84" stroke-dasharray="1.5 1"/><line x1="5" y1="6.5" x2="9" y2="6.5" stroke="#e03030"/><line x1="5" y1="8.5" x2="9" y2="8.5" stroke="#e03030"/></svg><div class="a tt" style="left:87px;top:481.9px">ЗагрузкаИзФайла</div><svg class="a" style="left:243px;top:490px" width="9" height="8" viewBox="0 0 9 8" ><path d="M0.8 2.6 L3.9 5.6 L8.2 1.2" fill="none" stroke="#b00000" stroke-width="1.9"/></svg><div class="a" style="left:0;top:506px;width:1px;height:5px;background:#b4b4b4"></div><svg class="a" style="left:9px;top:502px" width="13" height="13" viewBox="0 0 13 13" ><rect x="0.5" y="0.5" width="12" height="12" fill="#eef3f8" stroke="#8aa0b4"/><rect x="1" y="1" width="11" height="1.5" fill="#8aa0b4"/><line x1="2.5" y1="4.5" x2="10.5" y2="4.5" stroke="#9fb3c6"/><line x1="2.5" y1="6.5" x2="10.5" y2="6.5" stroke="#9fb3c6"/><line x1="2.5" y1="8.5" x2="10.5" y2="8.5" stroke="#9fb3c6"/><line x1="2.5" y1="10.5" x2="10.5" y2="10.5" stroke="#9fb3c6"/></svg><div class="a tt" style="left:30px;top:500.9px">Документы</div><div class="a" style="left:0;top:525px;width:1px;height:5px;background:#b4b4b4"></div><svg class="a" style="left:9px;top:520px" width="14" height="15" viewBox="0 0 14 15" ><rect x="1.5" y="0.5" width="11.5" height="13" rx="1" fill="#d8e8d0" stroke="#a8b8a0"/><rect x="0.5" y="1" width="11" height="13" rx="1" fill="#5ea045" stroke="#3f7a2c"/><rect x="4" y="3" width="5" height="1.5" fill="#e6f3dc"/><rect x="2" y="6.5" width="2" height="1" fill="#e6f3dc"/><rect x="2" y="9.5" width="2" height="1" fill="#e6f3dc"/></svg><div class="a tt" style="left:30px;top:519.9px">Журналы документов</div><div class="a" style="left:0;top:544px;width:1px;height:5px;background:#b4b4b4"></div><svg class="a" style="left:9px;top:539px" width="14" height="14" viewBox="0 0 14 14" ><path d="M3.5 0.8 Q1.5 0.8 1.5 2.5 L1.5 5.5 L0.5 6.5 L1.5 7.5 L1.5 11 Q1.5 12.8 3.5 12.8" fill="none" stroke="#4a5f74" stroke-width="1"/><path d="M10.5 0.8 Q12.5 0.8 12.5 2.5 L12.5 5.5 L13.5 6.5 L12.5 7.5 L12.5 11 Q12.5 12.8 10.5 12.8" fill="none" stroke="#4a5f74" stroke-width="1"/><rect x="4" y="10.5" width="1.2" height="1.2" fill="#4a5f74"/><rect x="6.5" y="10.5" width="1.2" height="1.2" fill="#4a5f74"/><rect x="9" y="10.5" width="1.2" height="1.2" fill="#4a5f74"/></svg><div class="a tt" style="left:30px;top:538.9px">Перечисления</div><div class="a" style="left:0;top:563px;width:1px;height:5px;background:#b4b4b4"></div><svg class="a" style="left:9px;top:558px" width="12" height="14" viewBox="0 0 12 14" ><path d="M0.5 0.5 H8.5 L11.5 3.5 V13.5 H0.5 Z" fill="#f4f7fa" stroke="#8aa0b4"/><rect x="3" y="6" width="1.6" height="5" fill="#e04a3a"/><rect x="5.5" y="8" width="1.6" height="3" fill="#e8a030"/><rect x="8" y="7" width="1.6" height="4" fill="#4aa040"/><line x1="2" y1="11.5" x2="10" y2="11.5" stroke="#6a7a8a"/></svg><div class="a tt" style="left:30px;top:557.9px">Отчеты</div><div class="a" style="left:0;top:582px;width:1px;height:5px;background:#b4b4b4"></div><svg class="a" style="left:9px;top:576px" width="15" height="15" viewBox="0 0 15 15" ><path d="M10.5 0.5 L14.5 4.5 L10.5 8.5 L6.5 4.5 Z" fill="#f6de4a" stroke="#d8b830" stroke-width="0.8"/><path d="M6.5 4.5 H4 V9" fill="none" stroke="#222" stroke-width="0.9" stroke-dasharray="1 0.8"/><rect x="0.5" y="8.5" width="8" height="6" rx="1.8" fill="#8cc0e8" stroke="#3a6e9c" stroke-width="0.9"/><path d="M2 9.5 L4 12 L6 9.5 Z" fill="#111"/></svg><div class="a tt" style="left:30px;top:576.9px">Обработки</div><div class="a" style="left:0;top:601px;width:1px;height:5px;background:#b4b4b4"></div><svg class="a" style="left:9px;top:597px" width="13" height="12" viewBox="0 0 13 12" ><rect x="0.5" y="0.5" width="12" height="11" fill="#f4f8fb" stroke="#7a92a6"/><rect x="1" y="1" width="11" height="1.6" fill="#4f6f8f"/><line x1="3.5" y1="3.5" x2="3.5" y2="8.5" stroke="#9ab0c2" stroke-dasharray="1 1"/><line x1="5.5" y1="3.5" x2="5.5" y2="8.5" stroke="#9ab0c2" stroke-dasharray="1 1"/><line x1="7.5" y1="3.5" x2="7.5" y2="8.5" stroke="#9ab0c2" stroke-dasharray="1 1"/><line x1="9.5" y1="3.5" x2="9.5" y2="8.5" stroke="#9ab0c2" stroke-dasharray="1 1"/><rect x="1.9" y="9" width="1.2" height="1.2" fill="#3a6e9c"/><rect x="3.9" y="9" width="1.2" height="1.2" fill="#3a6e9c"/><rect x="5.9" y="9" width="1.2" height="1.2" fill="#3a6e9c"/><rect x="7.9" y="9" width="1.2" height="1.2" fill="#3a6e9c"/><rect x="9.9" y="9" width="1.2" height="1.2" fill="#3a6e9c"/></svg><div class="a tt" style="left:30px;top:595.9px">Планы видов характеристик</div><svg class="a" style="left:9px;top:615px" width="13" height="13" viewBox="0 0 13 13" ><path d="M0.5 1.8 H7 M3.8 1.8 V9 M5.5 4.8 H12 M8.8 4.8 V12.5" fill="none" stroke="#4a8cc4" stroke-width="1.6"/></svg><div class="a tt" style="left:30px;top:614.9px">Планы счетов</div><svg class="a" style="left:9px;top:635px" width="14" height="12" viewBox="0 0 14 12" ><path d="M7 1 L13.5 4.5 L7 8 L0.5 4.5 Z" fill="#3ea84a"/><path d="M0.5 6.5 L7 10 L13.5 6.5 L13.5 8 L7 11.5 L0.5 8 Z" fill="#5cbc5c"/></svg><div class="a tt" style="left:30px;top:633.9px">Планы видов расчета</div><div class="a" style="left:0;top:658px;width:1px;height:5px;background:#b4b4b4"></div><svg class="a" style="left:9px;top:654px" width="13" height="13" viewBox="0 0 13 13" ><rect x="0.5" y="0.5" width="12" height="12" fill="#eaf4e6" stroke="#7a8a7a"/><rect x="1" y="1" width="11" height="2" fill="#5aa050"/><line x1="4.5" y1="1" x2="4.5" y2="12.5" stroke="#7a8a7a"/><line x1="8.5" y1="1" x2="8.5" y2="12.5" stroke="#7a8a7a"/><line x1="0.5" y1="6" x2="12.5" y2="6" stroke="#7a8a7a"/><line x1="0.5" y1="9" x2="12.5" y2="9" stroke="#7a8a7a"/></svg><div class="a tt" style="left:30px;top:652.9px">Регистры сведений</div><svg class="a" style="left:9px;top:673px" width="13" height="13" viewBox="0 0 13 13" ><rect x="0.5" y="0.5" width="12" height="12" fill="#f4f7fa" stroke="#8aa0b4"/><ellipse cx="6.5" cy="8.5" rx="3.5" ry="1.6" fill="#e8b820" stroke="#b08010" stroke-width="0.7"/><ellipse cx="6.5" cy="6" rx="3.5" ry="1.6" fill="#f4d040" stroke="#b08010" stroke-width="0.7"/><ellipse cx="6.5" cy="3.8" rx="3.5" ry="1.6" fill="#f8e070" stroke="#b08010" stroke-width="0.7"/></svg><div class="a tt" style="left:30px;top:671.9px">Регистры накопления</div><svg class="a" style="left:9px;top:692px" width="13" height="13" viewBox="0 0 13 13" ><rect x="0.5" y="0.5" width="12" height="12" fill="#f4f7fa" stroke="#8aa0b4"/><path d="M2.5 3 H7 M4.8 3 V8 M6 5.5 H10.5 M8.3 5.5 V11" fill="none" stroke="#3a78b0" stroke-width="1.2"/></svg><div class="a tt" style="left:30px;top:690.9px">Регистры бухгалтерии</div><svg class="a" style="left:9px;top:711px" width="13" height="13" viewBox="0 0 13 13" ><rect x="0.5" y="0.5" width="12" height="12" fill="#f4f7fa" stroke="#8aa0b4"/><path d="M6.5 4 L10 6 L6.5 8 L3 6 Z" fill="#3ea84a"/></svg><div class="a tt" style="left:30px;top:709.9px">Регистры расчета</div><div class="a" style="left:0;top:734px;width:1px;height:5px;background:#b4b4b4"></div><svg class="a" style="left:9px;top:729px" width="14" height="15" viewBox="0 0 14 15" ><rect x="4.5" y="0.5" width="5" height="3" fill="#7fa6cc" stroke="#3a6a94" stroke-width="0.8"/><line x1="7" y1="3.5" x2="7" y2="5.5" stroke="#555"/><path d="M4 5.5 H10 L11 9 H3 Z" fill="#f0c8a0" stroke="#b07040" stroke-width="0.8"/><path d="M0.5 9.5 L4 9.5 L2.2 13 Z" fill="#4a5a6a"/><path d="M10 9 L13 11.5 L10 14 L7 11.5 Z" fill="#e03a2a"/></svg><div class="a tt" style="left:30px;top:728.9px">Бизнес-процессы</div><div class="a" style="left:0;top:753px;width:1px;height:5px;background:#b4b4b4"></div><svg class="a" style="left:9px;top:748px" width="12" height="14" viewBox="0 0 12 14" ><rect x="0.5" y="0.5" width="11" height="13" fill="#f4f7fa" stroke="#8aa0b4"/><rect x="2.5" y="2.9" width="1.2" height="1.2" fill="#e05a4a"/><line x1="4.8" y1="3.5" x2="9.5" y2="3.5" stroke="#7a8ea2"/><rect x="2.5" y="5.4" width="1.2" height="1.2" fill="#e05a4a"/><line x1="4.8" y1="6" x2="9.5" y2="6" stroke="#7a8ea2"/><rect x="2.5" y="7.9" width="1.2" height="1.2" fill="#e05a4a"/><line x1="4.8" y1="8.5" x2="9.5" y2="8.5" stroke="#7a8ea2"/><rect x="2.5" y="10.4" width="1.2" height="1.2" fill="#e05a4a"/><line x1="4.8" y1="11" x2="9.5" y2="11" stroke="#7a8ea2"/></svg><div class="a tt" style="left:30px;top:747.9px">Задачи</div><svg class="a" style="left:9px;top:767px" width="15" height="16" viewBox="0 0 15 16" ><path d="M0.5 2.5 V11 Q5 13.5 9.5 11 V2.5" fill="#7ab8e8" stroke="#3a7ab0" stroke-width="0.8"/><ellipse cx="5" cy="2.5" rx="4.5" ry="2" fill="#b8dcf4" stroke="#3a7ab0" stroke-width="0.8"/><circle cx="10" cy="10" r="2.3" fill="#f0a830" stroke="#b06a10" stroke-width="0.7"/><circle cx="7.5" cy="13" r="2.3" fill="#f0a830" stroke="#b06a10" stroke-width="0.7"/><circle cx="12.2" cy="13" r="2.3" fill="#f0a830" stroke="#b06a10" stroke-width="0.7"/></svg><div class="a tt" style="left:30px;top:766.9px">Внешние источники данных</div></div>
<!-- tree scrollbar -->
<div class="a" style="left:286px;top:0;width:17px;height:794px;background:#f8f7f2;border-left:1px solid #b9b394;border-right:1px solid #b9b394"></div>
<div class="a" style="left:303px;top:0;width:5px;height:794px;background:#f5f2dc"></div>
<div class="a" style="left:307px;top:0;width:1px;height:793px;background:#9c9ca0"></div><div class="a" style="left:308px;top:0;width:1px;height:793px;background:#6a6a6a"></div>
<div class="a" style="left:309px;top:0;width:16px;height:793px;background:repeating-conic-gradient(#dbd9c4 0 25%,#f6f4e0 0 50%) 0 0/2px 2px"></div>
<!-- bottom -->
<div class="a" style="left:0;top:794px;width:1260px;height:1px;background:#bdb796"></div>
<div class="a" style="left:303px;top:793px;width:957px;height:2px;background:#fff"></div>
<div class="a" style="left:0;top:795px;width:1260px;height:5px;background:#f3f0dd"></div>
<div class="a" style="left:0;top:800px;width:1260px;height:17px;background:#b0b0b0"></div>
<div class="a" style="left:0;top:817px;width:1260px;height:1px;background:#bdb796"></div>
<div class="a" style="left:0;top:818px;width:1260px;height:15px;background:linear-gradient(#faf7e6,#efead2)"></div>
<div class="a" style="left:478px;top:818px;width:1px;height:15px;background:#a8a48a"></div>
<div class="a" style="left:972px;top:818px;width:1px;height:15px;background:#a8a48a"></div>

<div class="a" style="left:-11px;top:801.44px;font:bold 12px/12px 'Liberation Sans',sans-serif;white-space:nowrap;color:#333">Табло - 1</div><div class="a" style="left:-12px;top:821.99px;font:11px/11px 'Liberation Sans',sans-serif;white-space:nowrap;color:#222">Выражение</div><div class="a" style="left:483.3px;top:822.24px;font:10.7px/10.7px 'Liberation Sans',sans-serif;white-space:nowrap;color:#222">Значение</div><div class="a" style="left:977.5px;top:821.99px;font:11px/11px 'Liberation Sans',sans-serif;white-space:nowrap;color:#222">Тип</div>
<!-- code -->
<div class="code" style="top:19.5px"><span class="cm">// Устанавливает параметры загрузки данных из файла.</span>
<span class="cm">//</span>
<span class="cm">// Параметры:</span>
<span class="cm">//  Параметры - см. ЗагрузкаДанныхИзФайла.ПараметрыЗагрузкиИзФайла</span>
<span class="cm">//</span>
<span class="kw">Процедура</span> <span class="id">ОпределитьПараметрыЗагрузкиДанныхИзФайла</span><span class="pu">(</span><span class="id">Параметры</span><span class="pu">)</span> <span class="kw">Экспорт</span>

    <span class="id">Параметры</span><span class="pu">.</span><span class="id">ОбязательныеКолонки</span><span class="pu">.</span><span class="id">Добавить</span><span class="pu">(</span>"КолонкаСТипомДата"<span class="pu">);</span>
    <span class="id">Параметры</span><span class="pu">.</span><span class="id">ТипДанныхКолонки</span><span class="pu">.</span><span class="id">Вставить</span><span class="pu">(</span>"КолонкаСТипомБулево"<span class="pu">,</span> <span class="kw">Новый</span> <span class="id">ОписаниеТипов</span><span class="pu">(</span>"Булево"<span class="pu">));</span></div>

<div class="a" style="left:333px;top:0;width:1px;height:446px;background:#4a4a52"></div><svg class="a" style="left:329px;top:24px" width="9" height="9" viewBox="0 0 9 9"><rect x="0.5" y="0.5" width="8" height="8" fill="#fbfaf6" stroke="#4a4a52"/><line x1="2" y1="4.5" x2="7" y2="4.5" stroke="#4a4a52"/></svg><svg class="a" style="left:329px;top:119px" width="9" height="9" viewBox="0 0 9 9"><rect x="0.5" y="0.5" width="8" height="8" fill="#fbfaf6" stroke="#4a4a52"/><line x1="2" y1="4.5" x2="7" y2="4.5" stroke="#4a4a52"/></svg><svg class="a" style="left:329px;top:252px" width="9" height="9" viewBox="0 0 9 9"><rect x="0.5" y="0.5" width="8" height="8" fill="#fbfaf6" stroke="#4a4a52"/><line x1="2" y1="4.5" x2="7" y2="4.5" stroke="#4a4a52"/><line x1="4.5" y1="2" x2="4.5" y2="7" stroke="#4a4a52"/></svg><svg class="a" style="left:329px;top:271px" width="9" height="9" viewBox="0 0 9 9"><rect x="0.5" y="0.5" width="8" height="8" fill="#fbfaf6" stroke="#4a4a52"/><line x1="2" y1="4.5" x2="7" y2="4.5" stroke="#4a4a52"/></svg><svg class="a" style="left:329px;top:347px" width="9" height="9" viewBox="0 0 9 9"><rect x="0.5" y="0.5" width="8" height="8" fill="#fbfaf6" stroke="#4a4a52"/><line x1="2" y1="4.5" x2="7" y2="4.5" stroke="#4a4a52"/><line x1="4.5" y1="2" x2="4.5" y2="7" stroke="#4a4a52"/></svg><svg class="a" style="left:329px;top:366px" width="9" height="9" viewBox="0 0 9 9"><rect x="0.5" y="0.5" width="8" height="8" fill="#fbfaf6" stroke="#4a4a52"/><line x1="2" y1="4.5" x2="7" y2="4.5" stroke="#4a4a52"/><line x1="4.5" y1="2" x2="4.5" y2="7" stroke="#4a4a52"/></svg><div class="a" style="left:333px;top:104px;width:5px;height:1px;background:#4a4a52"></div><div class="a" style="left:333px;top:218px;width:5px;height:1px;background:#4a4a52"></div><div class="a" style="left:333px;top:313px;width:5px;height:1px;background:#4a4a52"></div><div class="a" style="left:333px;top:445px;width:5px;height:1px;background:#4a4a52"></div><svg class="a" style="left:309px;top:305px" width="16" height="16" viewBox="0 0 16 16"><defs><radialGradient id="bp" cx="0.45" cy="0.3" r="0.7"><stop offset="0" stop-color="#fde0d8"/><stop offset="0.6" stop-color="#f58a76"/><stop offset="1" stop-color="#e9705c"/></radialGradient></defs><circle cx="8" cy="8" r="6.4" fill="url(#bp)" stroke="#8a8a8a" stroke-width="0.6"/></svg><svg class="a" style="left:321px;top:415px" width="14" height="21" viewBox="0 0 14 21"><path d="M1 1 L1 17 L4.8 13.4 L7.6 19.6 L10 18.6 L7.3 12.5 L12.4 12.5 Z" fill="#fff" stroke="#000" stroke-width="1" stroke-linejoin="round"/></svg><div class="a" style="left:287px;top:0;width:15px;height:7px;background:linear-gradient(90deg,#f3f0dc,#ebe6c8);border-bottom:1px solid #c9c3a0"></div><div class="a" style="left:287px;top:723px;width:15px;height:51px;background:linear-gradient(90deg,#f4f1de,#ece6c6);border-top:1px solid #c9c3a0;border-bottom:1px solid #c9c3a0"></div><div class="a" style="left:293px;top:746px;width:4px;height:4px;border-radius:50%;background:#c8c4b0"></div><div class="a" style="left:287px;top:774px;width:15px;height:20px;background:#f6f4ea"></div><svg class="a" style="left:290px;top:779px" width="10" height="8" viewBox="0 0 10 8"><path d="M1 1 H9 L5 7 Z" fill="#c9c7c0"/></svg>
<div class="a" style="left:341px;top:210px;width:915px;height:617px;background:#fff;border:1px solid #a3a3a3;box-shadow:0 0 7px rgba(0,0,0,.28)"></div><svg class="a" style="left:356px;top:223px" width="19" height="18" viewBox="0 0 19 18"><path d="M9.5 1.2 L11.8 6.6 L17.6 7 L13.1 10.7 L14.6 16.4 L9.5 13.3 L4.4 16.4 L5.9 10.7 L1.4 7 L7.2 6.6 Z" fill="none" stroke="#b9c1c9" stroke-width="1.1" stroke-linejoin="round"/></svg><div class="a" style="left:385px;top:223.16px;font:18px/18px 'Liberation Sans',sans-serif;white-space:nowrap;letter-spacing:0.37px;color:#000">Загрузка данных в справочник "Тестовый справочник"</div><svg class="a" style="left:1039px;top:224px" width="16" height="16" viewBox="0 0 16 16"><rect x="1.5" y="1.5" width="13" height="13" rx="1.5" fill="none" stroke="#3a3a3a" stroke-width="1.2"/><rect x="4.5" y="1.5" width="7" height="4.5" fill="none" stroke="#3a3a3a" stroke-width="1.1"/><line x1="6" y1="3.7" x2="10" y2="3.7" stroke="#3a3a3a" stroke-width="1"/><rect x="4.5" y="10" width="7" height="4.5" fill="#3a3a3a"/><rect x="6.5" y="11" width="3" height="3.5" fill="#fff"/></svg><svg class="a" style="left:1070px;top:223px" width="18" height="17" viewBox="0 0 18 17"><path d="M4.5 5 V1.5 H13.5 V5" fill="none" stroke="#3a3a3a" stroke-width="1.2"/><path d="M4 12.5 H2 Q1.5 12.5 1.5 12 V6 Q1.5 5 2.5 5 H15.5 Q16.5 5 16.5 6 V12 Q16.5 12.5 16 12.5 H14" fill="none" stroke="#3a3a3a" stroke-width="1.2"/><rect x="4.5" y="9" width="9" height="6.5" fill="#fff" stroke="#3a3a3a" stroke-width="1.2"/><line x1="6.5" y1="11.5" x2="11.5" y2="11.5" stroke="#3a3a3a"/><line x1="6.5" y1="13.5" x2="10" y2="13.5" stroke="#3a3a3a"/><line x1="13" y1="7" x2="15" y2="7" stroke="#3a3a3a"/></svg><svg class="a" style="left:1102px;top:224px" width="17" height="16" viewBox="0 0 17 16"><path d="M8 14.5 H2.5 Q1.5 14.5 1.5 13.5 V2.5 Q1.5 1.5 2.5 1.5 H12.5 Q13.5 1.5 13.5 2.5 V6" fill="none" stroke="#3a3a3a" stroke-width="1.2"/><circle cx="9.5" cy="10" r="3" fill="none" stroke="#3a3a3a" stroke-width="1.3"/><line x1="11.7" y1="12.2" x2="14.5" y2="15" stroke="#3a3a3a" stroke-width="1.6"/></svg><svg class="a" style="left:1133px;top:223px" width="17" height="17" viewBox="0 0 17 17"><path d="M7 10 L10 7" stroke="#555" stroke-width="1.1"/><path d="M8.2 4.6 L10.4 2.4 Q12 0.9 13.9 2.6 L14.4 3.1 Q16 4.9 14.4 6.6 L12.3 8.7" fill="none" stroke="#555" stroke-width="1.1"/><path d="M8.8 12.4 L6.6 14.6 Q5 16.1 3.1 14.4 L2.6 13.9 Q1 12.1 2.6 10.4 L4.7 8.3" fill="none" stroke="#555" stroke-width="1.1"/></svg><svg class="a" style="left:1171px;top:226px" width="5" height="11" viewBox="0 0 5 11"><circle cx="2.5" cy="1.8" r="1.3" fill="#555"/><circle cx="2.5" cy="5.5" r="1.3" fill="#555"/><circle cx="2.5" cy="9.2" r="1.3" fill="#555"/></svg><svg class="a" style="left:1199px;top:226px" width="11" height="11" viewBox="0 0 11 11"><rect x="1" y="1.5" width="8.5" height="8" fill="none" stroke="#222" stroke-width="1.3"/></svg><svg class="a" style="left:1229px;top:225px" width="12" height="12" viewBox="0 0 12 12"><path d="M1 1 L11 11 M11 1 L1 11" stroke="#333" stroke-width="1.2"/></svg><div class="a" style="left:354.5px;top:259.96px;font:12.8px/12.8px 'Liberation Sans',sans-serif;white-space:nowrap;color:#4a4a4a">Вариант загрузки:</div><div class="a" style="left:467px;top:254px;width:284px;height:25px;border:1px solid #aeaeae;border-radius:3px;background:#fff"></div><div class="a" style="left:609px;top:255px;width:141px;height:23px;background:linear-gradient(#f7f7f7,#e6e6e6);border-left:1px solid #c2c2c2;border-radius:0 2px 2px 0"></div><div class="a" style="left:468px;top:277px;width:282px;height:1px;background:#c8c8c8"></div><div class="a" style="left:477.5px;top:260.70px;font:12.4px/12.4px 'Liberation Sans',sans-serif;white-space:nowrap;color:#1c9a4e">Заполнение таблицы</div><div class="a" style="left:620.3px;top:260.36px;font:12.8px/12.8px 'Liberation Sans',sans-serif;white-space:nowrap;color:#3c3c3c">Из внешнего файла</div><div class="a" style="left:354.5px;top:289.85px;font:12.7px/12.7px 'Liberation Sans',sans-serif;white-space:nowrap;color:#444">Для заполнения таблицы скопируйте данные в таблицу из внешнего файла через буфер обмена.</div><div class="a" style="left:354.5px;top:306.05px;font:12.7px/12.7px 'Liberation Sans',sans-serif;white-space:nowrap;color:#444">Колонка, обязательная для заполнения: "Дата"</div><div class="a" style="left:354px;top:329px;width:882px;height:422px;border:1px solid #a8a8a8;background:#fff"></div><div class="a" style="left:355px;top:352px;width:866px;height:1px;background:#d6d6d6"></div><div class="a" style="left:355px;top:386px;width:866px;height:1px;background:#e0e0e0"></div><div class="a" style="left:355px;top:403px;width:866px;height:1px;background:#e0e0e0"></div><div class="a" style="left:355px;top:420px;width:866px;height:1px;background:#e0e0e0"></div><div class="a" style="left:355px;top:437px;width:866px;height:1px;background:#e0e0e0"></div><div class="a" style="left:355px;top:454px;width:866px;height:1px;background:#e0e0e0"></div><div class="a" style="left:355px;top:471px;width:866px;height:1px;background:#e0e0e0"></div><div class="a" style="left:355px;top:488px;width:866px;height:1px;background:#e0e0e0"></div><div class="a" style="left:355px;top:505px;width:866px;height:1px;background:#e0e0e0"></div><div class="a" style="left:355px;top:522px;width:866px;height:1px;background:#e0e0e0"></div><div class="a" style="left:355px;top:539px;width:866px;height:1px;background:#e0e0e0"></div><div class="a" style="left:355px;top:556px;width:866px;height:1px;background:#e0e0e0"></div><div class="a" style="left:355px;top:573px;width:866px;height:1px;background:#e0e0e0"></div><div class="a" style="left:355px;top:590px;width:866px;height:1px;background:#e0e0e0"></div><div class="a" style="left:355px;top:607px;width:866px;height:1px;background:#e0e0e0"></div><div class="a" style="left:355px;top:624px;width:866px;height:1px;background:#e0e0e0"></div><div class="a" style="left:355px;top:641px;width:866px;height:1px;background:#e0e0e0"></div><div class="a" style="left:355px;top:658px;width:866px;height:1px;background:#e0e0e0"></div><div class="a" style="left:355px;top:675px;width:866px;height:1px;background:#e0e0e0"></div><div class="a" style="left:355px;top:692px;width:866px;height:1px;background:#e0e0e0"></div><div class="a" style="left:355px;top:709px;width:866px;height:1px;background:#e0e0e0"></div><div class="a" style="left:355px;top:726px;width:866px;height:1px;background:#e0e0e0"></div><div class="a" style="left:571px;top:353px;width:1px;height:383px;background:#e0e0e0"></div><div class="a" style="left:787px;top:353px;width:1px;height:383px;background:#e0e0e0"></div><div class="a" style="left:1004px;top:353px;width:1px;height:383px;background:#e0e0e0"></div><div class="a" style="left:365px;top:335.87px;font:12.2px/12.2px 'Liberation Sans',sans-serif;white-space:nowrap;color:#333">Строка</div><div class="a" style="left:583px;top:334.06px;font:bold 16px/16px 'Liberation Sans',sans-serif;white-space:nowrap;color:#222">Дата</div><div class="a" style="left:798px;top:335.20px;font:13px/13px 'Liberation Sans',sans-serif;white-space:nowrap;color:#333">Булево</div><div class="a" style="left:1015.5px;top:336.07px;font:12.2px/12.2px 'Liberation Sans',sans-serif;white-space:nowrap;color:#333">Номенклатура</div><div class="a" style="left:791px;top:355.27px;font:12.2px/12.2px 'Liberation Sans',sans-serif;white-space:nowrap;color:#333">Истина</div><svg class="a" style="left:781px;top:330px" width="6" height="6" viewBox="0 0 6 6"><path d="M0 0 H6 V6 Z" fill="#e00000"/></svg><div class="a" style="left:1001px;top:349px;width:220px;height:24px;border:2px solid #f5c200;border-right:none"></div><svg class="a" style="left:355px;top:368px" width="866" height="3" viewBox="0 0 866 3"><line x1="0" y1="1.5" x2="866" y2="1.5" stroke="#2a2a2a" stroke-width="1.1" stroke-dasharray="6 2"/></svg><svg class="a" style="left:1219px;top:330px" width="3" height="406" viewBox="0 0 3 406"><line x1="1.5" y1="0" x2="1.5" y2="406" stroke="#2a2a2a" stroke-width="1.1" stroke-dasharray="6 2"/></svg><svg class="a" style="left:1223px;top:336px" width="10" height="8" viewBox="0 0 10 8"><path d="M2 7 L5 3 L8 7 Z" fill="#bdbdbd"/></svg><div class="a" style="left:1224px;top:353px;width:8px;height:360px;background:#9b9b9b;border-radius:4px"></div><svg class="a" style="left:1223px;top:721px" width="10" height="8" viewBox="0 0 10 8"><path d="M2 2 L5 6 L8 2 Z" fill="#555"/></svg><svg class="a" style="left:362px;top:738px" width="8" height="10" viewBox="0 0 8 10"><path d="M6 2 L2 5 L6 8 Z" fill="#bdbdbd"/></svg><div class="a" style="left:378px;top:739px;width:820px;height:8px;background:#d4d4d4;border-radius:4px"></div><div class="a" style="left:378px;top:739px;width:735px;height:8px;background:#9b9b9b;border-radius:4px"></div><svg class="a" style="left:1206px;top:738px" width="8" height="10" viewBox="0 0 8 10"><path d="M2 2 L6 5 L2 8 Z" fill="#555"/></svg><div class="a" style="left:355.4px;top:762.93px;font:12.6px/12.6px 'Liberation Sans',sans-serif;white-space:nowrap;color:#2d62b8;text-decoration:underline;text-underline-offset:2px">Изменить бланк</div><div class="a" style="left:456px;top:762.60px;font:13px/13px 'Liberation Sans',sans-serif;white-space:nowrap;color:#2d62b8">?</div><div class="a" style="left:354px;top:787px;width:77px;height:26px;background:linear-gradient(#ffffff,#fbfbfb 50%,#e9e9e9);border:1px solid #b5b5b5;border-radius:3px;box-shadow:0 1px 1px rgba(0,0,0,.18)"></div><div class="a" style="left:368.5px;top:794.45px;font:12.7px/12.7px 'Liberation Sans',sans-serif;white-space:nowrap;color:#404040">&lt; Назад</div><div class="a" style="left:1069px;top:787px;width:81px;height:26px;background:linear-gradient(#ffe94c,#ffe000 55%,#f1d000);border:1px solid #bfa000;border-radius:3px;box-shadow:0 1px 1px rgba(0,0,0,.2)"></div><div class="a" style="left:1083px;top:793.77px;font:bold 13.5px/13.5px 'Liberation Sans',sans-serif;white-space:nowrap;color:#3a3a3a">Далее &gt;</div><div class="a" style="left:1159px;top:787px;width:77px;height:26px;background:linear-gradient(#ffffff,#fbfbfb 50%,#e9e9e9);border:1px solid #b5b5b5;border-radius:3px;box-shadow:0 1px 1px rgba(0,0,0,.18)"></div><div class="a" style="left:1174px;top:794.87px;font:12.2px/12.2px 'Liberation Sans',sans-serif;white-space:nowrap;color:#404040">Закрыть</div>
<svg class="a" style="left:0;top:0;filter:drop-shadow(0 1px 1.2px rgba(0,0,0,.45))" width="1260" height="833" viewBox="0 0 1260 833"><rect x="8" y="269.5" width="275" height="234.2" rx="3.5" fill="none" stroke="#f03c3c" stroke-width="4"/><rect x="1054.3" y="777.6" width="109.4" height="42.8" rx="3.5" fill="none" stroke="#f03c3c" stroke-width="4"/><path d="M718 161 C650 186 623 201 609.8 313" fill="none" stroke="#f03c3c" stroke-width="4.4" stroke-linecap="round"/><path d="M601.3 306 L604.5 330.4 L616.7 309.2 L610.5 313.5 Z" fill="#f03c3c" stroke="#f03c3c" stroke-width="1" stroke-linejoin="round"/><path d="M817 188.4 L830.5 310" fill="none" stroke="#f03c3c" stroke-width="4.4" stroke-linecap="round"/><path d="M822.7 304.5 L832.8 326.1 L837.8 302.3 L830 309 Z" fill="#f03c3c" stroke="#f03c3c" stroke-width="1" stroke-linejoin="round"/><path d="M913.7 447.7 L856 392" fill="none" stroke="#f03c3c" stroke-width="5.2" stroke-linecap="round"/><path d="M842.2 376.9 L864.6 387.7 L857 392.5 L853.4 399.6 Z" fill="#f03c3c" stroke="#f03c3c" stroke-width="1" stroke-linejoin="round"/><g style="font:bold 17.5px 'Liberation Sans',sans-serif" fill="#fff" stroke="#f03c3c" stroke-width="5" stroke-linejoin="round" paint-order="stroke"><text x="576.6" y="370.2" text-anchor="middle" textLength="245.9" lengthAdjust="spacingAndGlyphs">Автоматически выделено</text><text x="577.2" y="391.7" text-anchor="middle" textLength="140.3" lengthAdjust="spacingAndGlyphs">полужирным и</text><text x="576.6" y="413.2" text-anchor="middle" textLength="241.5" lengthAdjust="spacingAndGlyphs">установлено примечание</text><text x="577.2" y="434.7" text-anchor="middle" textLength="151.4" lengthAdjust="spacingAndGlyphs">"Обязательно к</text><text x="576.7" y="456.2" text-anchor="middle" textLength="254.8" lengthAdjust="spacingAndGlyphs">заполнению". В макете это</text><text x="577.2" y="477.7" text-anchor="middle" textLength="104.8" lengthAdjust="spacingAndGlyphs">не сделано</text><text x="958.8" y="481.4" text-anchor="middle" textLength="186.8" lengthAdjust="spacingAndGlyphs">Тут для введенного</text><text x="959.4" y="502.9" text-anchor="middle" textLength="198.8" lengthAdjust="spacingAndGlyphs">строкового значения</text><text x="959.4" y="524.4" text-anchor="middle" textLength="182.0" lengthAdjust="spacingAndGlyphs">будет предпринята</text><text x="959.7" y="545.9" text-anchor="middle" textLength="217.8" lengthAdjust="spacingAndGlyphs">попытка приведения к</text><text x="958.9" y="567.4" text-anchor="middle" textLength="159.1" lengthAdjust="spacingAndGlyphs">указанному типу</text></g></svg>
</body></html>
